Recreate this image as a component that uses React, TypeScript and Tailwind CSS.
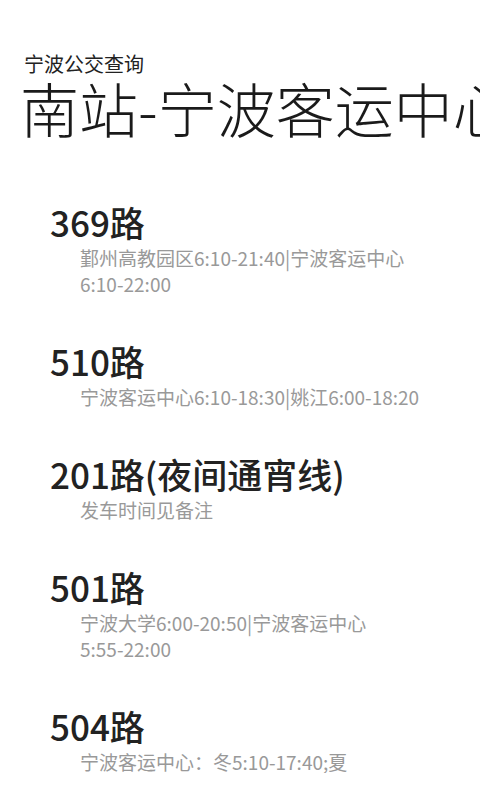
import React from "react";

const routes = [
  { name: "369路", desc: "鄞州高教园区6:10-21:40|宁波客运中心6:10-22:00" },
  { name: "510路", desc: "宁波客运中心6:10-18:30|姚江6:00-18:20" },
  { name: "201路(夜间通宵线)", desc: "发车时间见备注" },
  { name: "501路", desc: "宁波大学6:00-20:50|宁波客运中心5:55-22:00" },
  { name: "504路", desc: "宁波客运中心：冬5:10-17:40;夏5:10-18:10" },
];

function Desc({ text }: { text: string }) {
  const parts = text.split(/(\d+:\d+-\d+:\d+)/).filter((p) => p.length > 0);
  return (
    <>
      {parts.map((p, i) =>
        /^\d+:\d+-\d+:\d+$/.test(p) ? (
          <span key={i} className="whitespace-nowrap">
            {p}
          </span>
        ) : (
          <span key={i}>{p}</span>
        )
      )}
    </>
  );
}

export default function App() {
  return (
    <div
      className="w-[480px] h-[800px] bg-white overflow-hidden flex flex-col"
      style={{ fontFamily: '"Noto Sans CJK SC", "Noto Sans", sans-serif' }}
    >
      <div className="pt-[51px] pl-[24px] text-[20px] leading-[26px] text-[#222]">
        宁波公交查询
      </div>
      <div className="pl-[20px] -mt-[2px] text-[59px] leading-[66px] font-light text-[#1a1a1a] whitespace-nowrap">
        南站-宁波客运中心
      </div>
      <div className="mt-[58px] h-[574px] overflow-hidden pl-[50px] pr-[50px]">
        {routes.map((r) => (
          <div key={r.name} className="mb-[41px]">
            <div className="text-[35px] leading-[46px] font-medium text-[#222]">
              {r.name}
            </div>
            <div className="pl-[30px] text-[19px] leading-[26px] text-[#999]">
              <Desc text={r.desc} />
            </div>
          </div>
        ))}
      </div>
    </div>
  );
}
